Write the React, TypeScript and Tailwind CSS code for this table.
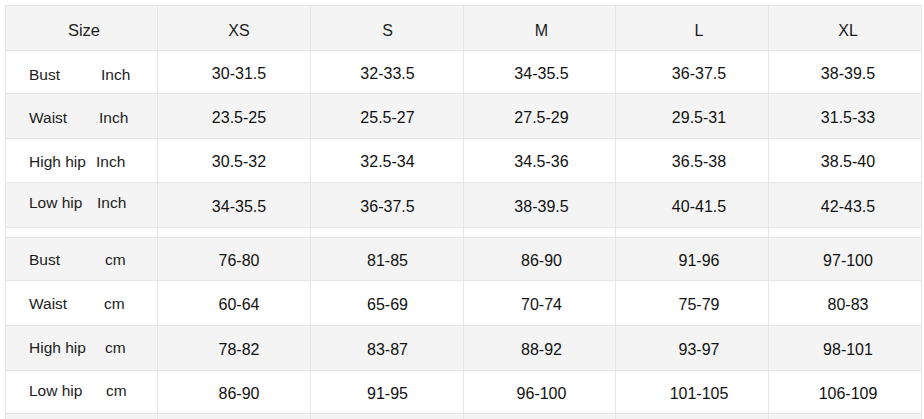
import React from "react";

type Row = { label: string; unit: string; vals: string[]; h: string; bg: string; unitMl: string; lpt: string };

const GRAY = "bg-[#f4f4f4]";
const WHITE = "bg-white";

const rows: Row[] = [
  { label: "Bust", unit: "Inch", vals: ["30-31.5", "32-33.5", "34-35.5", "36-37.5", "38-39.5"], h: "h-[43px]", bg: WHITE, unitMl: "w-[72px]", lpt: "pt-[5px]" },
  { label: "Waist", unit: "Inch", vals: ["23.5-25", "25.5-27", "27.5-29", "29.5-31", "31.5-33"], h: "h-[45px]", bg: GRAY, unitMl: "w-[70px]", lpt: "pt-[3px]" },
  { label: "High hip", unit: "Inch", vals: ["30.5-32", "32.5-34", "34.5-36", "36.5-38", "38.5-40"], h: "h-[44px]", bg: WHITE, unitMl: "w-[67px]", lpt: "pt-[2px]" },
  { label: "Low hip", unit: "Inch", vals: ["34-35.5", "36-37.5", "38-39.5", "40-41.5", "42-43.5"], h: "h-[45px]", bg: GRAY, unitMl: "w-[68px]", lpt: "pb-[4px]" },
];

const rows2: Row[] = [
  { label: "Bust", unit: "cm", vals: ["76-80", "81-85", "86-90", "91-96", "97-100"], h: "h-[43px]", bg: GRAY, unitMl: "w-[76px]", lpt: "pt-[2px]" },
  { label: "Waist", unit: "cm", vals: ["60-64", "65-69", "70-74", "75-79", "80-83"], h: "h-[45px]", bg: WHITE, unitMl: "w-[75px]", lpt: "pt-[2px]" },
  { label: "High hip", unit: "cm", vals: ["78-82", "83-87", "88-92", "93-97", "98-101"], h: "h-[45px]", bg: GRAY, unitMl: "w-[76px]", lpt: "pt-0" },
  { label: "Low hip", unit: "cm", vals: ["86-90", "91-95", "96-100", "101-105", "106-109"], h: "h-[43px]", bg: WHITE, unitMl: "w-[77px]", lpt: "pb-[2px]" },
];

const colW = ["w-[152px]", "w-[153px]", "w-[153px]", "w-[152px]", "w-[153px]", "w-[153px]"];
const colPad = ["pl-[10px]", "pl-[1px]", "pl-[4px]", "pl-[14px]", "pl-[6px]"];
const cell = "border-r border-b border-[#e6e6e6] flex items-center";

function DataRow({ r }: { r: Row }) {
  return (
    <div className={`flex ${r.h} ${r.bg}`}>
      <div className={`${colW[0]} ${cell} pl-[23px] ${r.lpt} text-[15.5px] text-[#1c1c1c]`}>
        <span className={`${r.unitMl} shrink-0`}>{r.label}</span>
        <span>{r.unit}</span>
      </div>
      {r.vals.map((v, i) => (
        <div key={i} className={`${colW[i + 1]} ${cell} justify-center pt-[3px] text-[16px] text-[#111] ${colPad[i]}`}>
          {v}
        </div>
      ))}
    </div>
  );
}

export default function App() {
  const heads = ["XS", "S", "M", "L", "XL"];
  return (
    <div className="w-[924px] h-[419px] overflow-hidden bg-white" style={{ fontFamily: '"Liberation Sans", Arial, sans-serif' }}>
      <div className="ml-[5px] mt-[5px] w-[917px] border-l border-t border-[#e6e6e6]">
        <div className={`flex h-[45px] ${GRAY}`}>
          <div className={`${colW[0]} ${cell} justify-center pl-[5px] pt-[5px] text-[16.5px] text-[#1c1c1c]`}>Size</div>
          {heads.map((h, i) => (
            <div key={h} className={`${colW[i + 1]} ${cell} justify-center pt-[5px] text-[16px] text-[#1c1c1c] ${colPad[i]}`}>
              {h}
            </div>
          ))}
        </div>
        {rows.map((r) => (
          <DataRow key={r.label + r.unit} r={r} />
        ))}
        <div className="flex h-[10px] bg-white">
          {colW.map((w, i) => (
            <div key={i} className={`${w} border-r border-b border-[#e6e6e6]`} />
          ))}
        </div>
        {rows2.map((r) => (
          <DataRow key={r.label + r.unit} r={r} />
        ))}
        <div className={`flex h-[20px] ${GRAY}`}>
          {colW.map((w, i) => (
            <div key={i} className={`${w} border-r border-b border-[#e6e6e6]`} />
          ))}
        </div>
      </div>
    </div>
  );
}
